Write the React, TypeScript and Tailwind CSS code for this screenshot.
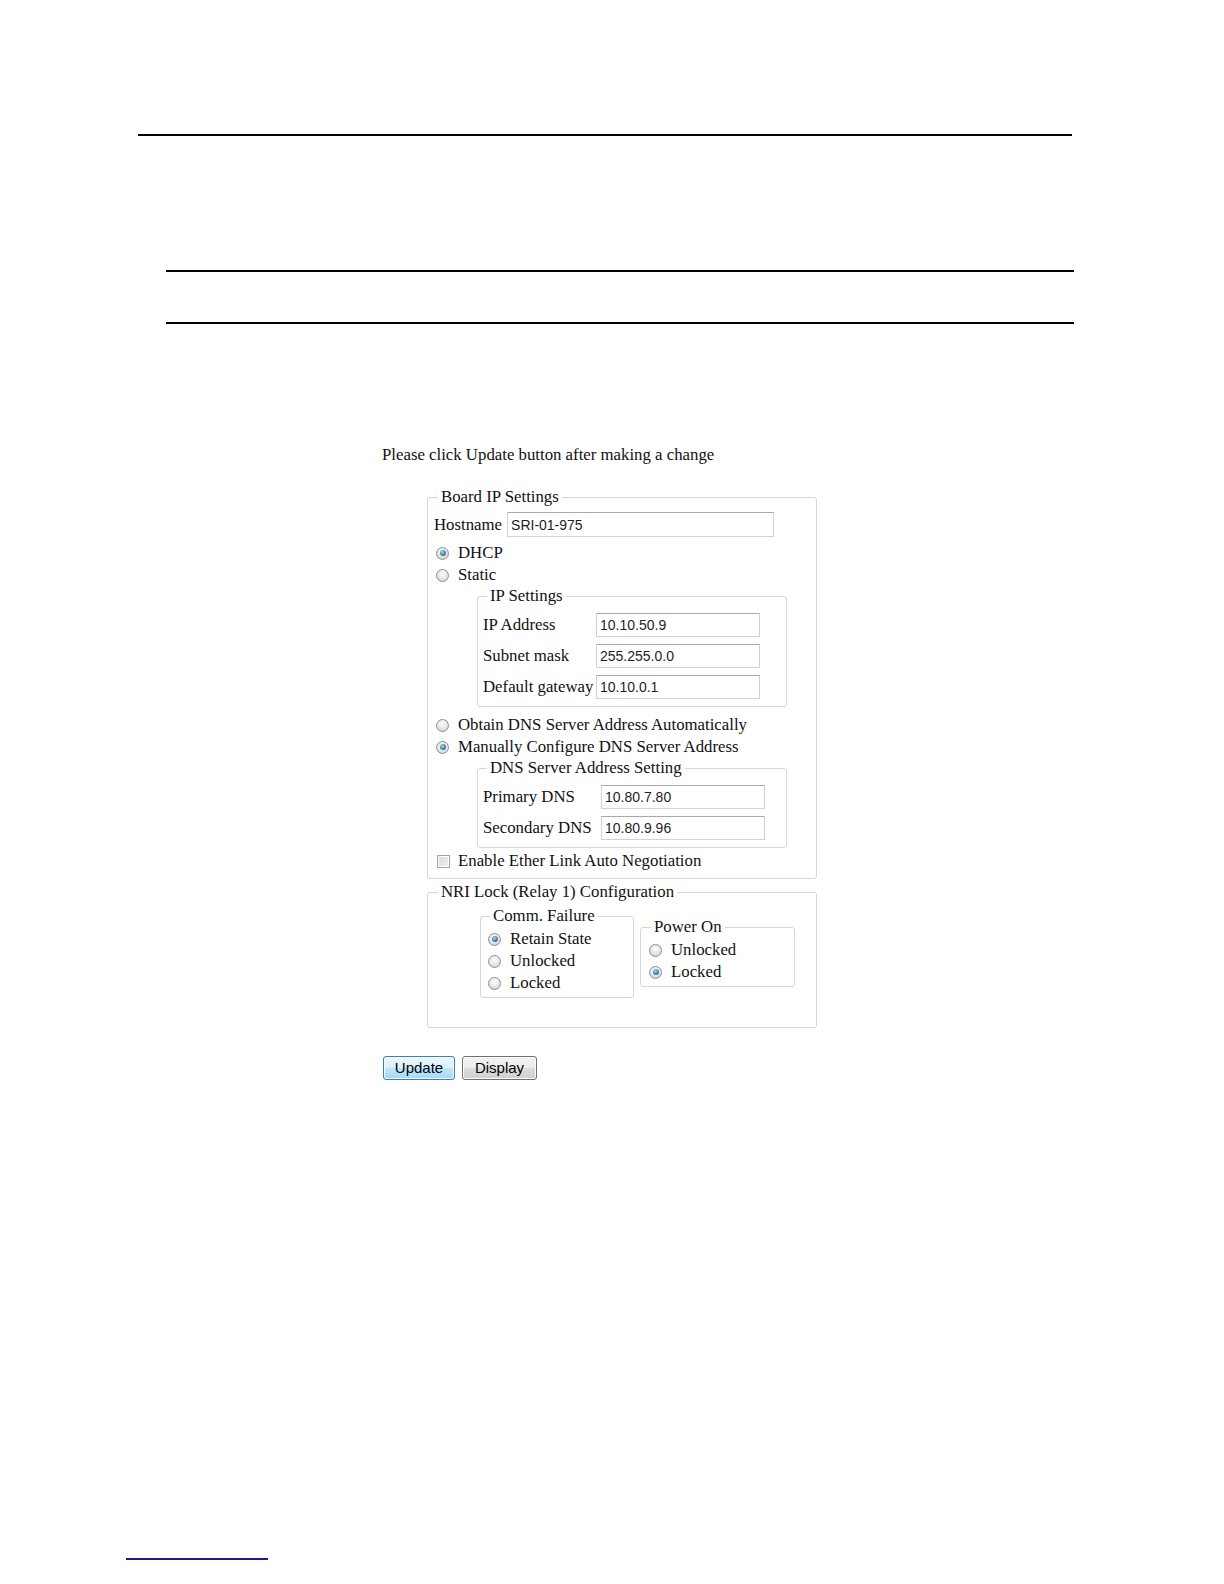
import React from 'react'

const serif = 'font-["Liberation_Serif","Times_New_Roman",serif]'

function Radio({ checked }: { checked?: boolean }) {
  return (
    <span className="flex h-[13px] w-[13px] shrink-0 items-center justify-center rounded-full border border-[#8f8f8f] bg-[radial-gradient(circle_at_50%_35%,#ffffff,#e2e2e2_60%,#c4c4c4)]">
      {checked && (
        <span className="h-[6px] w-[6px] rounded-full bg-[radial-gradient(circle_at_40%_35%,#a6d4f0,#2b6d99_70%,#1d4f73)]" />
      )}
    </span>
  )
}

function RadioRow({ label, checked }: { label: string; checked?: boolean }) {
  return (
    <div className="flex h-[22px] items-center">
      <span className="ml-[2px] flex items-center">
        <Radio checked={checked} />
      </span>
      <span className="ml-[9px] whitespace-nowrap">{label}</span>
    </div>
  )
}

function Field({ value, className }: { value: string; className: string }) {
  return (
    <div
      className={`flex items-center border border-[#d2d2d2] border-t-[#a9a9a9] bg-white px-[3px] font-["Liberation_Sans",Arial,sans-serif] text-[14px] leading-none text-[#1e1e1e] ${className}`}
    >
      {value}
    </div>
  )
}

function Box({
  legend,
  className,
  children,
}: {
  legend: string
  className: string
  children: React.ReactNode
}) {
  return (
    <fieldset className={`rounded-[3px] border border-[#d6d6d6] ${className}`}>
      <legend className="ml-[4px] px-[3px] leading-[18px] whitespace-nowrap">{legend}</legend>
      {children}
    </fieldset>
  )
}

function LabeledInput({ label, value, labelW }: { label: string; value: string; labelW: string }) {
  return (
    <div className="flex h-[31px] items-center">
      <span className={`${labelW} shrink-0 whitespace-nowrap`}>{label}</span>
      <Field value={value} className="h-[24px] w-[164px]" />
    </div>
  )
}

export default function App() {
  return (
    <div className={`h-screen w-full overflow-hidden bg-white pt-[134px] text-[16.8px] leading-[18px] text-[#111] ${serif}`}>
      <div className="ml-[138px] h-[2px] w-[934px] bg-black" />
      <div className="ml-[166px] mt-[134px] h-[2px] w-[908px] bg-black" />
      <div className="ml-[166px] mt-[50px] h-[2px] w-[908px] bg-black" />

      <div className="ml-[382px] mt-[122px]">
        <p className="leading-[18px]">Please click Update button after making a change</p>

        <Box legend="Board IP Settings" className="ml-[45px] mt-[24px] w-[390px] pb-[6px] pl-[6px]">
          <div className="mt-[5px] flex h-[27px] items-center">
            <span className="whitespace-nowrap">Hostname</span>
            <Field value="SRI-01-975" className="ml-[5px] h-[25px] w-[267px]" />
          </div>
          <div className="mt-[4px]">
            <RadioRow label="DHCP" checked />
            <RadioRow label="Static" />
          </div>

          <Box legend="IP Settings" className="ml-[43px] mt-[1px] w-[310px] pb-[4px] pl-[5px]">
            <div className="mt-[4px]">
              <LabeledInput label="IP Address" value="10.10.50.9" labelW="w-[113px]" />
              <LabeledInput label="Subnet mask" value="255.255.0.0" labelW="w-[113px]" />
              <LabeledInput label="Default gateway" value="10.10.0.1" labelW="w-[113px]" />
            </div>
          </Box>

          <div className="mt-[7px]">
            <RadioRow label="Obtain DNS Server Address Automatically" />
            <RadioRow label="Manually Configure DNS Server Address" checked />
          </div>

          <Box legend="DNS Server Address Setting" className="ml-[43px] mt-[1px] w-[310px] pb-[4px] pl-[5px]">
            <div className="mt-[4px]">
              <LabeledInput label="Primary DNS" value="10.80.7.80" labelW="w-[118px]" />
              <LabeledInput label="Secondary DNS" value="10.80.9.96" labelW="w-[118px]" />
            </div>
          </Box>

          <div className="mt-[2px] flex h-[22px] items-center">
            <span className="ml-[3px] h-[13px] w-[13px] border border-[#a4a4a4] bg-[linear-gradient(135deg,#d6d6d6,#f4f4f4)] shadow-[inset_0_0_0_1px_#ffffff]" />
            <span className="ml-[8px] whitespace-nowrap">Enable Ether Link Auto Negotiation</span>
          </div>
        </Box>

        <Box legend="NRI Lock (Relay 1) Configuration" className="ml-[45px] mt-[4px] w-[390px] pb-[29px] pl-[6px]">
          <div className="ml-[46px] mt-[6px] flex items-start">
            <Box legend="Comm. Failure" className="w-[154px] pb-[3px] pl-[5px]">
              <div className="mt-[3px]">
                <RadioRow label="Retain State" checked />
                <RadioRow label="Unlocked" />
                <RadioRow label="Locked" />
              </div>
            </Box>
            <Box legend="Power On" className="ml-[6px] mt-[11px] w-[155px] pb-[3px] pl-[6px]">
              <div className="mt-[3px]">
                <RadioRow label="Unlocked" />
                <RadioRow label="Locked" checked />
              </div>
            </Box>
          </div>
        </Box>

        <div className='ml-[1px] mt-[28px] flex gap-[7px] font-["Liberation_Sans",Arial,sans-serif] text-[15px] text-black'>
          <button className="flex h-[24px] w-[72px] items-center justify-center rounded-[3px] border border-[#3c7fb1] bg-[linear-gradient(#eaf6fd,#d9f0fc_50%,#bee6fd_51%,#a7d9f5)] shadow-[inset_0_0_0_1px_#f5fbff]">
            Update
          </button>
          <button className="flex h-[24px] w-[75px] items-center justify-center rounded-[3px] border border-[#707070] bg-[linear-gradient(#f2f2f2,#ebebeb_50%,#dddddd_51%,#cfcfcf)] shadow-[inset_0_0_0_1px_#fcfcfc]">
            Display
          </button>
        </div>
      </div>

      <div className="ml-[126px] mt-[478px] h-[2px] w-[142px] bg-[#1c1c8a]" />
    </div>
  )
}
